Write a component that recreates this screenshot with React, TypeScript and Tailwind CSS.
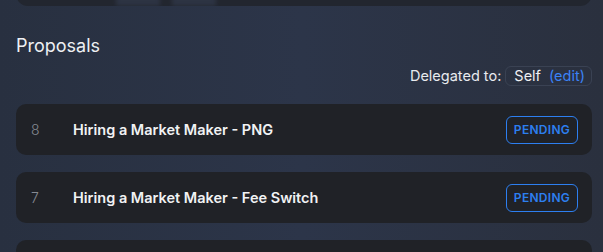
// App.tsx
// Governance proposals list: heading, delegation chip and proposal rows.

import React from "react";

interface Proposal {
  id: number;
  title: string;
  status: string;
}

const proposals: Proposal[] = [
  { id: 8, title: "Hiring a Market Maker - PNG", status: "PENDING" },
  { id: 7, title: "Hiring a Market Maker - Fee Switch", status: "PENDING" },
  { id: 6, title: "", status: "" },
];

const App: React.FC = () => {
  return (
    <div
      className="min-h-screen overflow-hidden bg-gradient-to-r from-[#283040] via-[#2c3549] to-[#2a303e] pl-[16px] pr-[11px] text-white"
      style={{ fontFamily: "Inter, 'Noto Sans', sans-serif" }}
    >
      {/* ── Card above (cut off by the viewport) ── */}
      <div className="-mt-[34px] flex h-[40px] overflow-hidden rounded-[12px] bg-[#22262f]">
        <div className="w-[100px]" />
        <div className="w-[44px] bg-[#2d3443] blur-[2px]" />
        <div className="w-[12px]" />
        <div className="w-[44px] bg-[#2d3443] blur-[2px]" />
      </div>

      {/* ── Heading ── */}
      <h2 className="mt-[26px] text-[18px] leading-[28px] text-[#eef0f3]">Proposals</h2>

      {/* ── Delegation ── */}
      <div className="mt-[6px] flex items-center justify-end gap-[4px] text-[14.5px] leading-[20px]">
        <span className="text-[#e8eaee]">Delegated to:</span>
        <span className="flex h-[20px] items-center gap-[8px] rounded-[6px] border border-[#3a4253] pl-[8px] pr-[6px]">
          <span className="text-[#eef0f3]">Self</span>
          <span className="text-[#3b82f6]">(edit)</span>
        </span>
      </div>

      {/* ── Proposal rows ── */}
      <div className="mt-[18px] flex flex-col gap-[17px]">
        {proposals.map((p) => (
          <div
            key={p.id}
            className="flex h-[51px] items-center rounded-[10px] bg-[#202227] pl-[15px] pr-[14px]"
          >
            {p.title && (
              <>
                <span className="w-[42px] text-[14px] font-light text-[#868a92]">{p.id}</span>
                <span className="flex-1 text-[14.5px] font-semibold text-[#f1f2f4]">{p.title}</span>
                <span className="flex h-[28px] w-[72px] items-center justify-center rounded-[6px] border border-[#2d7ff0] text-[12px] font-semibold tracking-[0.3px] text-[#2d7ff0]">
                  {p.status}
                </span>
              </>
            )}
          </div>
        ))}
      </div>
    </div>
  );
};

export default App;
